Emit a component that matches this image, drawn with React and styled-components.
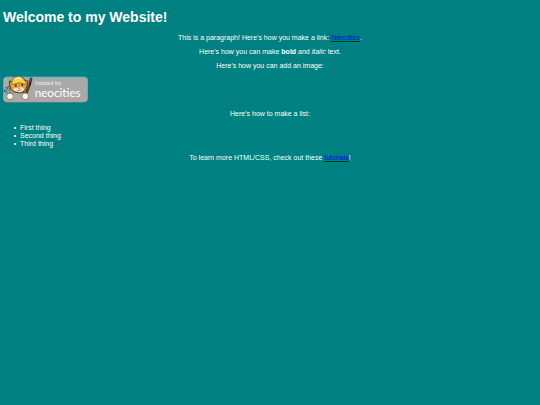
import React from "react";
import styled, { createGlobalStyle } from "styled-components";

const GlobalStyle = createGlobalStyle`
  body {
    margin: 0;
    background: #008080;
    color: white;
    font-family: "Liberation Sans", Arial, sans-serif;
    font-size: 7px;
    line-height: 8px;
  }
`;

const Page = styled.main`
  padding: 8px 3px;
`;

const Title = styled.h1`
  margin: 0 0 8px;
  font-size: 14px;
  line-height: 18px;
  font-weight: bold;
`;

const Paragraph = styled.p`
  margin: 0 0 6px;
  text-align: center;
`;

const Link = styled.a`
  color: #0000ee;
  text-decoration: underline;
`;

const Badge = styled.svg`
  display: block;
  width: 85px;
  height: 27px;
  margin-bottom: 7px;
`;

const List = styled.ul`
  margin: 0 0 6px;
  padding-left: 17px;
  list-style-type: "•  ";
`;

const NeocitiesBadge = () => (
  <Badge viewBox="9 12 255 81" role="img" aria-label="hosted by neocities">
    <rect x="10" y="15" width="253" height="75" rx="11" fill="#a9a9a9" />
    <rect
      x="10"
      y="15"
      width="253"
      height="75"
      rx="11"
      fill="none"
      stroke="#8eabaa"
      strokeWidth="2"
    />
    {/* fork */}
    <path d="M17 47 L31 66 M24 43 L28 56 M12 56 L26 64" stroke="#24434c" strokeWidth="6" />
    <path d="M17 48 L31 66 M24 45 L28 56 M14 57 L26 64" stroke="#86aebb" strokeWidth="4" />
    {/* brush */}
    <path d="M94 17 L89 39 L79 63" stroke="#35201c" strokeWidth="7" fill="none" />
    <path d="M93 19 L90 31" stroke="#a92532" strokeWidth="6" />
    <path d="M89 40 L80 61" stroke="#8a5036" strokeWidth="3" />
    {/* head */}
    <path
      d="M29 38 L28 27 L36 29 L43 16 L57 13 L69 17 L76 27 L84 27 L81 42 L76 55 L62 63 L43 60 L32 52 Z"
      fill="#e99a3c"
      stroke="#4b3721"
      strokeWidth="3"
    />
    <path d="M39 52 Q46 45 55 48 Q65 43 73 51 Q69 60 57 61 Q45 60 39 52" fill="#fff0dc" />
    <path
      d="M35 33 Q36 19 45 15 Q59 9 70 19 L75 28 L83 31 L75 36 Q56 28 39 38 Z"
      fill="#f6cf43"
      stroke="#76602b"
      strokeWidth="2"
    />
    <path d="M45 21 Q55 15 65 21" stroke="#fff099" strokeWidth="4" fill="none" />
    <path d="M47 38 L48 44 M67 36 L67 42" stroke="#2d201b" strokeWidth="4" />
    <path d="M54 48 L60 48 L57 51 Z" fill="#3b2724" />
    <path d="M50 54 Q57 60 65 52" stroke="#71422f" strokeWidth="2" fill="none" />
    {/* paws */}
    <path d="M35 62 L31 70 M71 60 L75 70" stroke="#8b5d35" strokeWidth="8" />
    <circle cx="30" cy="73" r="10" fill="#fff6e8" stroke="#6b5c4c" strokeWidth="2" />
    <circle cx="76" cy="73" r="10" fill="#fff6e8" stroke="#6b5c4c" strokeWidth="2" />
    <text x="106" y="39" fill="#eeeeee" fontFamily="Lato, sans-serif" fontSize="18">
      hosted by
    </text>
    <text x="104" y="75" fill="white" fontFamily="Lato, sans-serif" fontSize="35">
      neocities
    </text>
  </Badge>
);

const App = () => (
  <>
    <GlobalStyle />
    <Page>
      <Title>Welcome to my Website!</Title>
      <Paragraph>
        This is a paragraph! Here's how you make a link:{" "}
        <Link href="https://neocities.org">Neocities</Link>.
      </Paragraph>
      <Paragraph>
        Here's how you can make <strong>bold</strong> and <em>italic</em> text.
      </Paragraph>
      <Paragraph>Here's how you can add an image:</Paragraph>
      <NeocitiesBadge />
      <Paragraph>Here's how to make a list:</Paragraph>
      <List>
        <li>First thing</li>
        <li>Second thing</li>
        <li>Third thing</li>
      </List>
      <Paragraph>
        To learn more HTML/CSS, check out these{" "}
        <Link href="https://neocities.org/tutorials">tutorials</Link>!
      </Paragraph>
    </Page>
  </>
);

export default App;
